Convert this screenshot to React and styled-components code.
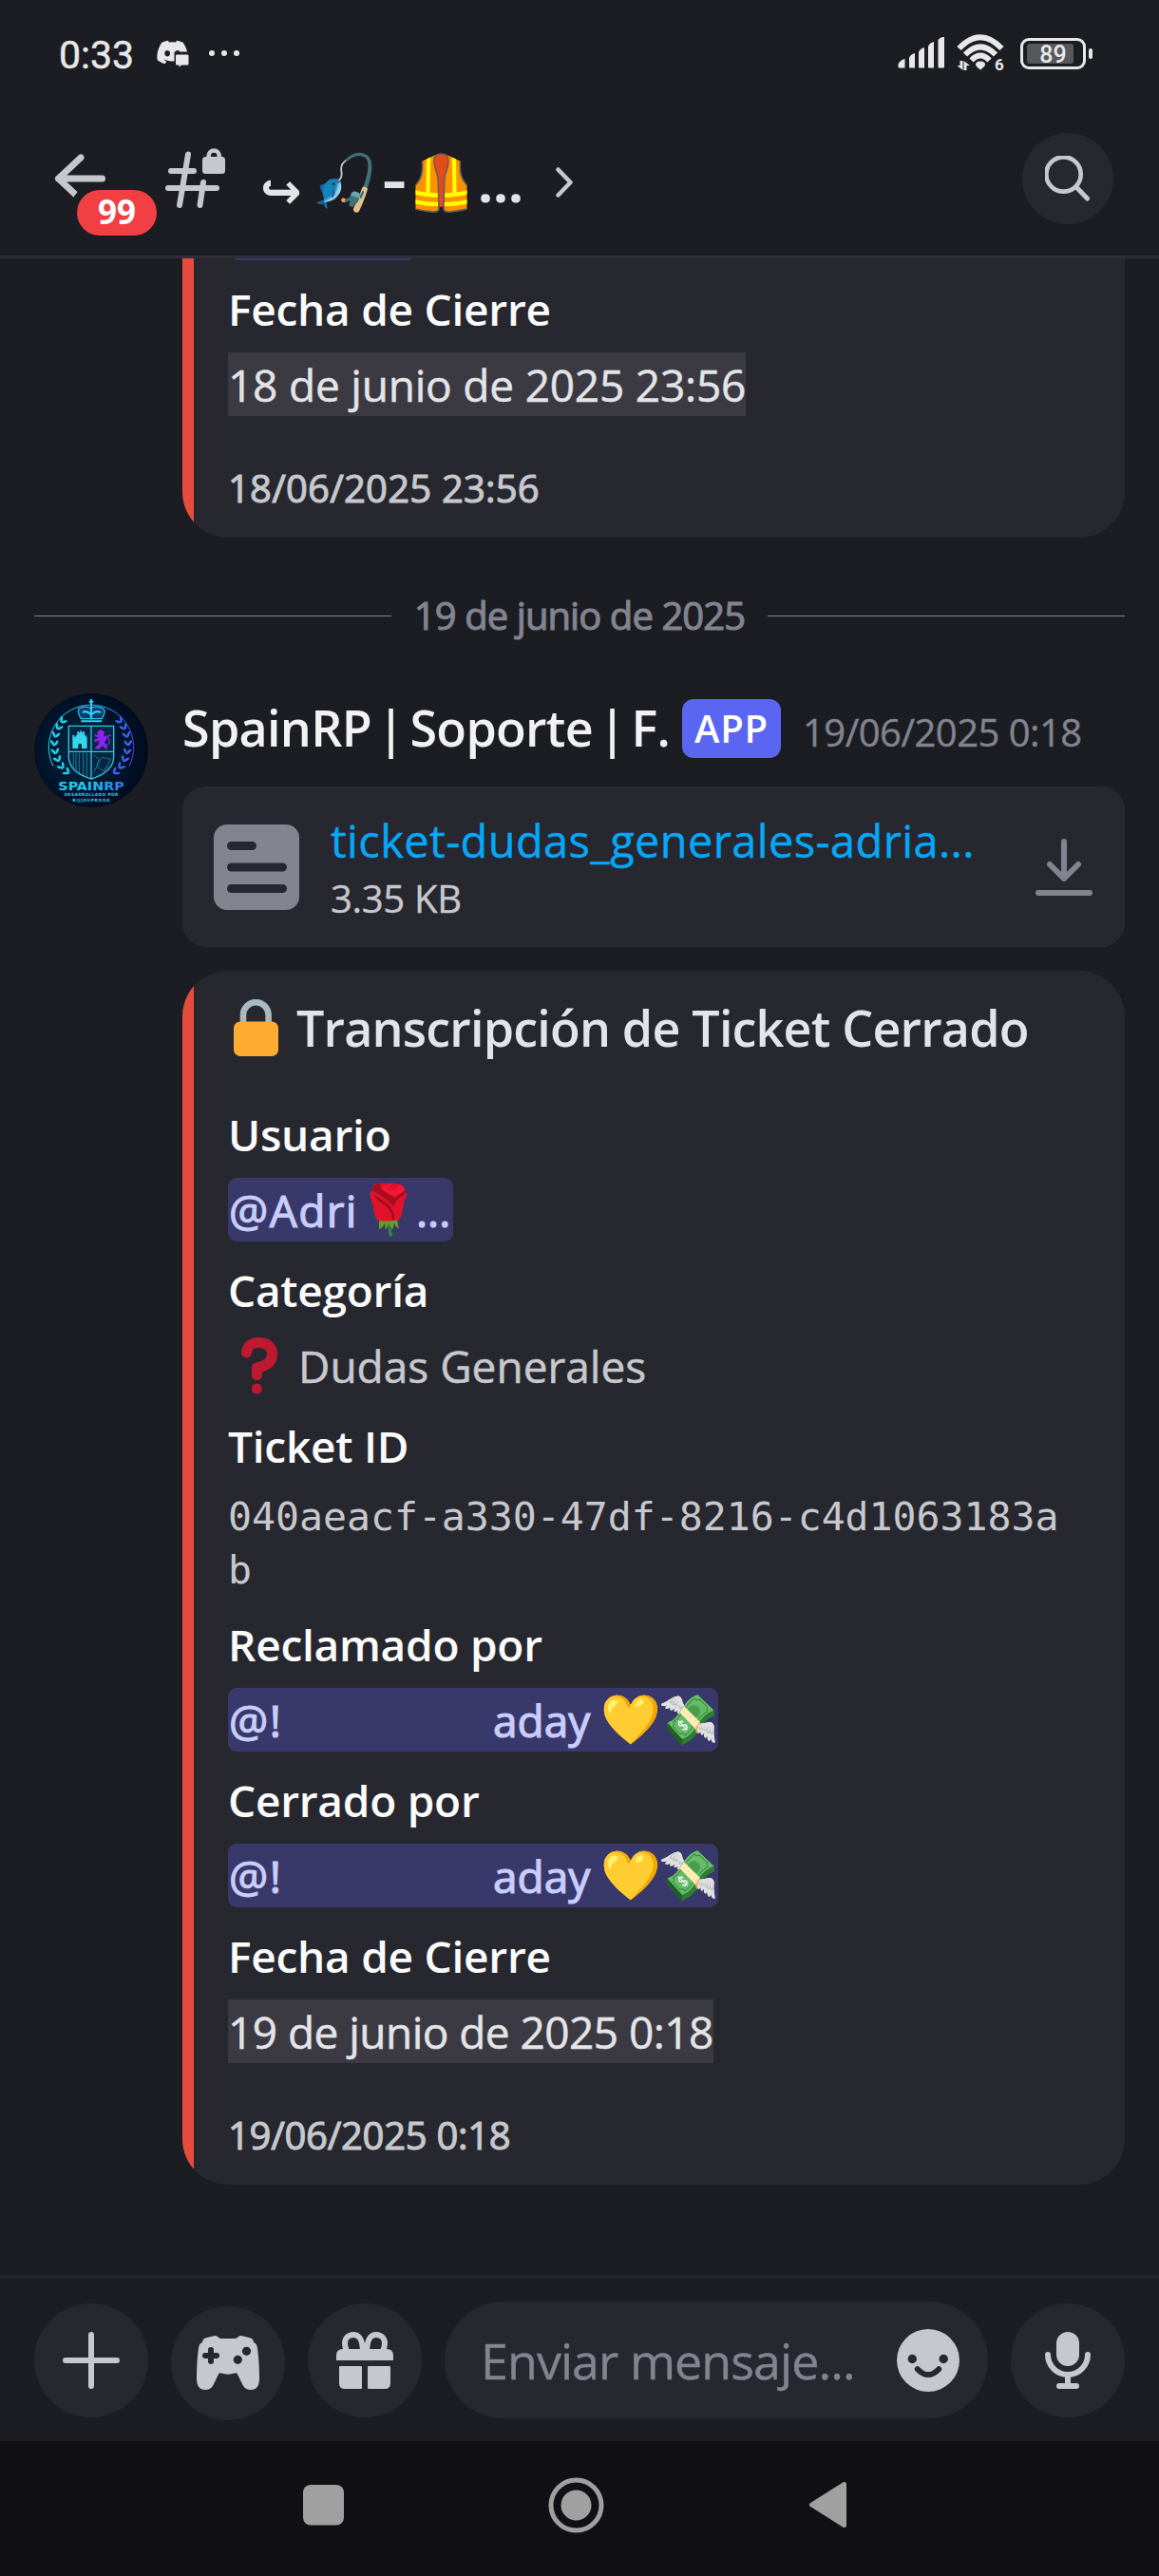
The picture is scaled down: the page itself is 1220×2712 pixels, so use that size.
import React from 'react';
import styled, { createGlobalStyle, ThemeProvider } from 'styled-components';
import { FaDiscord } from 'react-icons/fa';

const theme = {
  bg: '#1c1d22',
  surface: '#27282f',
  line: '#2e2f35',
  nav: '#111115',
  icon: '#c7c8cd',
  muted: '#82848f',
  status: '#e8e8e9',
  body: '#c7c8cd',
  strong: '#fbfbfb',
  title: '#e3e4e8',
  link: '#06a7f8',
  danger: '#f23f44',
  accent: '#e64c3d',
  blurple: '#5a66f2',
  mentionBg: '#38396a',
  mentionText: '#c9cdfb',
  timeBg: '#3b3a42',
};

const GlobalStyle = createGlobalStyle`
  *, *::before, *::after { box-sizing: border-box; }
  body { margin: 0; background: #1c1d22; }
`;

const Screen = styled.div`
  width: 1220px;
  height: 2712px;
  display: flex;
  flex-direction: column;
  overflow: hidden;
  background: ${({ theme }) => theme.bg};
  color: ${({ theme }) => theme.body};
  font-family: 'Open Sans', 'Noto Color Emoji', sans-serif;
  white-space: pre;
`;

/* ---------- status bar ---------- */

const StatusBar = styled.header`
  height: 112px;
  flex: none;
  display: flex;
  align-items: center;
  justify-content: space-between;
  padding: 0 70px 0 62px;
  color: ${({ theme }) => theme.status};
  font-family: Roboto, sans-serif;
`;

const StatusGroup = styled.div`
  display: flex;
  align-items: center;
`;

const Clock = styled.time`
  width: 78px;
  font-size: 41px;
  line-height: 48px;
  padding-top: 4px;
  margin-right: 24px;
  -webkit-text-stroke: 0.5px currentColor;
`;

const MoreDots = styled.div`
  display: flex;
  gap: 7px;
  margin-left: 20px;
`;

const MoreDot = styled.i`
  width: 6px;
  height: 6px;
  border-radius: 50%;
  background: currentColor;
`;

const Battery = styled.div`
  position: relative;
  width: 69px;
  height: 33px;
  margin-left: 11px;
  padding: 3px 4px;
  border: 3.5px solid currentColor;
  border-radius: 9px;
`;

const BatteryFill = styled.div`
  height: 100%;
  border-radius: 3px;
  background: #57585c;
`;

const BatteryLabel = styled.span`
  position: absolute;
  inset: 0;
  text-align: center;
  font-size: 25px;
  font-weight: 500;
  line-height: 29px;
`;

const BatteryTip = styled.div`
  width: 4px;
  height: 11px;
  margin-left: 3px;
  border-radius: 2px;
  background: currentColor;
`;

/* ---------- channel header ---------- */

const ChannelHeader = styled.nav`
  height: 160px;
  flex: none;
  display: flex;
  align-items: center;
  padding: 0 48px 5px 52px;
  border-bottom: 3px solid ${({ theme }) => theme.line};
  color: ${({ theme }) => theme.icon};
`;

const BackButton = styled.div`
  position: relative;
  width: 64px;
  height: 64px;
  margin-right: 58px;
`;

const UnreadBadge = styled.span`
  position: absolute;
  left: 29px;
  top: 44px;
  width: 84px;
  height: 48px;
  border-radius: 24px;
  background: ${({ theme }) => theme.danger};
  box-shadow: 0 0 0 8px ${({ theme }) => theme.bg};
  color: #fff;
  text-align: center;
  font-size: 35px;
  font-weight: 700;
  line-height: 46px;
`;

const ChannelName = styled.h1`
  margin: 0 auto 0 38px;
  display: flex;
  align-items: center;
  color: ${({ theme }) => theme.title};
  font-size: 56px;
  font-weight: 700;
  line-height: 70px;
`;

const HookArrow = styled.span`
  width: 40px;
  margin: 26px 18px 0 -2px;
  font-family: 'DejaVu Sans', sans-serif;
  font-size: 52px;
`;

const Emoji = styled.span`
  flex: none;
  display: flex;
  justify-content: center;
  width: ${({ $width }) => $width}px;
  padding-top: ${({ $drop }) => $drop || 0}px;
  font-family: 'Noto Color Emoji', sans-serif;
  font-size: ${({ $size }) => $size}px;
  font-weight: 400;
  line-height: 1;
`;

const Dash = styled.span`
  width: 42px;
  text-align: center;
  transform: scaleX(1.4);
`;

const Ellipsis = styled.span`
  width: 48px;
  margin: 0 34px 0 9px;
  padding-top: 6px;
`;

const SearchButton = styled.button`
  width: 96px;
  height: 96px;
  padding: 0;
  border: 0;
  border-radius: 50%;
  display: grid;
  place-items: center;
  background: ${({ theme }) => theme.surface};
  color: inherit;
`;

/* ---------- messages ---------- */

const Messages = styled.main`
  flex: 1;
  min-height: 0;
  overflow: hidden;
  padding: 0 36px;
`;

const Embed = styled.article`
  display: flex;
  overflow: hidden;
  border-radius: ${({ $cut }) => ($cut ? '0 0 48px 48px' : '48px')};
  margin-left: ${({ $cut }) => ($cut ? 156 : 0)}px;
  background: ${({ theme }) => theme.surface};
`;

const EmbedStripe = styled.div`
  width: 12px;
  flex: none;
  background: ${({ theme }) => theme.accent};
`;

const EmbedBody = styled.div`
  flex: 1;
  display: flex;
  flex-direction: column;
  align-items: flex-start;
  padding: ${({ $top }) => $top || 0}px 36px 27px;
`;

const EmbedTitle = styled.h2`
  margin: 0 0 26px 6px;
  display: flex;
  gap: 19px;
  color: ${({ theme }) => theme.title};
  font-size: 52px;
  font-weight: 600;
  line-height: 70px;
  letter-spacing: -0.8px;
`;

const TitleIcon = styled.span`
  display: flex;
  padding-top: 5px;
`;

const FieldName = styled.h3`
  margin: 21px 0 16px;
  color: ${({ theme }) => theme.strong};
  font-size: 46px;
  font-weight: 600;
  line-height: 60px;
  letter-spacing: -0.25px;
`;

const Value = styled.div`
  height: 67px;
  display: flex;
  align-items: center;
  font-size: 46px;
  letter-spacing: ${({ $spacing }) => $spacing || 0}px;
  -webkit-text-stroke: 0.5px currentColor;
`;

const Mention = styled(Value)`
  width: ${({ $width }) => $width}px;
  border-radius: 9px;
  background: ${({ theme }) => theme.mentionBg};
  color: ${({ theme }) => theme.mentionText};
  -webkit-text-stroke: 1.2px currentColor;
`;

const MentionTail = styled(Mention)`
  margin-top: -65px;
  border-radius: 12px;
`;

const MentionHandle = styled.span`
  flex: none;
  width: ${({ $width }) => $width}px;
  padding-left: 1px;
  letter-spacing: 1.4px;
`;

const MentionSuffix = styled.span`
  flex: none;
  width: 118px;
`;

const MentionMore = styled.span`
  margin-left: 9px;
`;

const Timestamp = styled(Value)`
  width: ${({ $width }) => $width}px;
  background: ${({ theme }) => theme.timeBg};
  color: ${({ theme }) => theme.title};
`;

const Category = styled(Value)`
  gap: 22px;
  padding-left: 14px;
`;

const Code = styled.code`
  width: 880px;
  height: 112px;
  padding-top: 1px;
  font-family: 'DejaVu Sans Mono', monospace;
  font-size: 41.5px;
  line-height: 56px;
  white-space: pre-wrap;
  word-break: break-all;
`;

const EmbedFooter = styled.footer`
  margin-top: 51px;
  font-size: 40px;
  line-height: 50px;
  letter-spacing: ${({ $spacing }) => $spacing}px;
  -webkit-text-stroke: 1.1px currentColor;
`;

const DayDivider = styled.div`
  display: flex;
  align-items: center;
  gap: 24px;
  margin: 57px 0 57px;
  color: ${({ theme }) => theme.muted};
  font-size: 40px;
  line-height: 50px;
  letter-spacing: -0.93px;
  -webkit-text-stroke: 1.1px currentColor;

  &::before,
  &::after {
    content: '';
    flex: 1;
    height: 1px;
    margin-top: 1px;
    background: currentColor;
  }
`;

const Message = styled.section`
  display: grid;
  grid-template-columns: 120px 1fr;
  column-gap: 36px;
`;

const MessageColumn = styled.div`
  display: flex;
  flex-direction: column;
`;

const MessageMeta = styled.div`
  height: 98px;
  display: flex;
  align-items: flex-start;
  padding-top: 1px;
`;

const Author = styled.strong`
  width: 526px;
  color: #f2f2f4;
  font-size: 52px;
  font-weight: 600;
  line-height: 70px;
  letter-spacing: -0.7px;
  word-spacing: -6.5px;
`;

const AppTag = styled.span`
  width: 104px;
  height: 62px;
  margin: 5px 23px 0 0;
  border-radius: 12px;
  background: ${({ theme }) => theme.blurple};
  color: #fff;
  text-align: center;
  font-size: 40px;
  font-weight: 600;
  line-height: 62px;
  letter-spacing: 0.8px;
`;

const SentAt = styled.time`
  color: ${({ theme }) => theme.muted};
  font-size: 40px;
  line-height: 70px;
  padding-top: 5px;
  letter-spacing: -0.55px;
  -webkit-text-stroke: 0.4px currentColor;
`;

const FileCard = styled.div`
  height: 169px;
  margin-bottom: 25px;
  display: flex;
  align-items: center;
  padding: 0 33px 0 32px;
  border: 1px solid #2b2c33;
  border-radius: 25px;
  background: ${({ theme }) => theme.surface};
  color: ${({ theme }) => theme.muted};
`;

const FileText = styled.div`
  flex: 1;
  margin-left: 33px;
  -webkit-text-stroke: 0.4px currentColor;
`;

const FileName = styled.div`
  color: ${({ theme }) => theme.link};
  font-size: 47px;
  line-height: 60px;
  letter-spacing: 0.36px;
`;

const FileSize = styled.div`
  margin-top: 6px;
  color: ${({ theme }) => theme.body};
  font-size: 40px;
  line-height: 50px;
  letter-spacing: -0.3px;
`;

/* ---------- composer and system nav ---------- */

const Composer = styled.footer`
  height: 175px;
  flex: none;
  display: flex;
  align-items: center;
  gap: 24px;
  padding: 0 36px;
  border-top: 4px solid #24252b;
  color: ${({ theme }) => theme.icon};
`;

const RoundButton = styled.button`
  width: 120px;
  height: 120px;
  flex: none;
  padding: 0;
  border: 0;
  border-radius: 50%;
  margin-top: ${({ $drop }) => $drop || 0}px;
  display: grid;
  place-items: center;
  background: ${({ theme }) => theme.surface};
  color: inherit;
`;

const Input = styled.div`
  flex: 1;
  height: 123px;
  border-radius: 62px;
  display: flex;
  align-items: center;
  justify-content: space-between;
  padding: 0 30px 0 38px;
  background: ${({ theme }) => theme.surface};
`;

const Placeholder = styled.span`
  color: ${({ theme }) => theme.muted};
  font-size: 52px;
  line-height: 70px;
  letter-spacing: -0.95px;
  -webkit-text-stroke: 0.4px currentColor;
`;

const SystemNav = styled.nav`
  height: 142px;
  flex: none;
  display: grid;
  grid-template-columns: repeat(3, 60px);
  column-gap: 205.5px;
  justify-content: center;
  align-items: center;
  justify-items: center;
  padding: 0 8px 8px 0;
  background: ${({ theme }) => theme.nav};
  color: #a0a0a1;
`;

/* ---------- drawings ---------- */

const stroke = (w) => ({ fill: 'none', stroke: 'currentColor', strokeWidth: w, strokeLinecap: 'round', strokeLinejoin: 'round' });

const DiscordNotice = () => (
  <svg width="36" height="30" viewBox="0 0 36 30">
    <FaDiscord size={35} y={-3.5} />
    <path d="M19.500 13.500h17v17h-17z" fill="#1c1d22" />
    <path d="M22 16.500h11.500a1 1 0 0 1 1 1v9a1 1 0 0 1-1 1h-6.500l-2.500 2.300v-2.300h-2.500a1 1 0 0 1-1-1v-9a1 1 0 0 1 1-1z" fill="currentColor" />
  </svg>
);

const Signal = () => (
  <svg width="50" height="34" viewBox="0 0 50 34" fill="currentColor">
    <path d="M0.500 28.500q2-4.500 7-5.500v9.500h-6q-1 0-1-1zM12 22q1.500-4 6-5v15.500h-5q-1 0-1-1zM22 16q1.500-4 6-5v21.500h-5q-1 0-1-1zM32 10q1.500-4 6-5v27.500h-5q-1 0-1-1zM42.500 3q1.500-2.500 6.500-3.500v32q0 1-1 1h-4.500q-1 0-1-1z" />
  </svg>
);

const SignalBox = styled.div`
  display: flex;
  margin-right: 12px;
`;

const Wifi = () => (
  <svg width="56" height="46" viewBox="0 -3 56 46">
    <g fill="none" stroke="currentColor" strokeWidth="6">
      <path d="M2.500 15Q25-8.500 47.500 15" />
      <path d="M9 21.500Q25 5.500 41 21.500" />
      <path d="M15.500 27.500Q25 17.500 34.500 27.500" />
    </g>
    <path d="M20 32q0-3.500 5-3.500t5 3.500q0 1.500-5 5.500q-5-4-5-5.500z" fill="currentColor" />
    <path d="M3.500 28h3v10L0.500 33h3zM9.500 38h-2V28l6.500 5h-3.500v5z" fill="currentColor" />
    <text x="40" y="38" fill="currentColor" fontFamily="Roboto, sans-serif" fontWeight="700" fontSize="17">6</text>
  </svg>
);

const BackArrow = () => (
  <svg width="64" height="64" viewBox="0 0 64 64">
    <path {...stroke(7)} d="M33 10 L9.500 32 L33 54 M9.500 32 H55.500" />
  </svg>
);

const LockedHash = () => (
  <svg width="64" height="64" viewBox="174 155 64 64">
    <path {...stroke(6)} d="M198 161.500L189 215M214 191L210.500 215M180 179H204M177 197H228" />
    <rect x="213" y="164" width="24" height="18" rx="3.500" fill="currentColor" />
    <path d="M219.700 166v-3a5.500 5.500 0 0 1 11 0v3" fill="none" stroke="currentColor" strokeWidth="4.500" />
  </svg>
);

const Chevron = () => (
  <svg width="18" height="32" viewBox="0 0 18 32">
    <path {...stroke(4.5)} d="M2.500 2.500L15.500 16L2.500 29.500" />
  </svg>
);

const ChevronBox = styled.span`
  display: flex;
  padding-top: 8px;
  color: ${({ theme }) => theme.icon};
`;

const SearchIcon = () => (
  <svg width="48" height="48" viewBox="0 0 48 48">
    <circle cx="19.500" cy="19.500" r="18.200" {...stroke(4.7)} />
    <path {...stroke(5)} d="M33 33L44.500 45" />
  </svg>
);

const LockEmoji = () => (
  <svg width="47" height="60" viewBox="0 0 47 60">
    <path d="M10 26V16.500a13.300 13.300 0 0 1 26.600 0V26" fill="none" stroke="#aab8c2" strokeWidth="6.600" />
    <rect y="23.500" width="47" height="36.500" rx="7" fill="#ffac33" />
  </svg>
);

const RoseEmoji = () => (
  <svg width="40" height="57" viewBox="26 16 120 171">
    <path d="M83 132l3 44q0 11 6 11q9-1 6-12q-4-4-1-16q3-12-3-27z" fill="#3b7f3c" />
    <path d="M58 128h54q4 20 6 32q-10-3-14-16q-2 14-5 20q-8-6-11-22q-4 16-12 22q-2-10-1-19q-6 13-18 18q-3-12 1-35z" fill="#6a9a2e" />
    <path d="M28 52q-2-8 8-8q-4-24 14-26q16-2 28 1q14-4 28 1q18-2 27 8q7 8 1 18q12 2 10 10q-4 10-8 16q-2 14-6 32q-4 24-12 30q-24 6-64 2q-14-8-16-48q-8-12-10-36z" fill="#e2122b" />
    <path d="M36 40q0-22 26-22q-8 12 10 24q22 12 38 28q-6 10-8 20q-20-20-40-32q-18-10-26-18z" fill="#a90d1f" />
    <path d="M40 52q6 8 24 18q40 22 42 64h-8q0-34-34-54q-20-12-24-28z" fill="#a00c1c" />
    <path d="M136 46q-22 4-32 24q-8 14-2 24q4-24 34-38z" fill="#a90d1f" />
    <path d="M64 36q12-16 32-16q-2 10-20 14q10 8 24 6q16-2 18-16q16 2 16 14q-6 14-26 20q-24-4-44-22z" fill="#f5173a" />
  </svg>
);

const QuestionEmoji = () => (
  <svg width="38" height="60" viewBox="0 0 38 60">
    <path {...stroke(11)} stroke="#be1931" d="M5.500 16C6 9 11.500 5.500 18.500 5.500C27 5.500 32.500 10 32.500 18C32.500 27 24 30.500 16.500 32V39.500" />
    <circle cx="16.300" cy="54" r="5.500" fill="#be1931" />
  </svg>
);

const FileIcon = () => (
  <svg width="90" height="90" viewBox="0 0 90 90">
    <rect width="90" height="90" rx="14" fill="currentColor" />
    <path d="M18.500 22.500H40.500M18.500 45H72.500M18.500 67.500H72.500" fill="none" stroke="#27282f" strokeWidth="9" strokeLinecap="round" />
  </svg>
);

const DownloadIcon = () => (
  <svg width="60" height="60" viewBox="0 0 60 60">
    <path {...stroke(6)} d="M30 3V41M15 27L30 42L45 27M3 57H57" />
  </svg>
);

const PlusIcon = () => (
  <svg width="60" height="60" viewBox="0 0 60 60">
    <path {...stroke(6)} d="M30 3V57M3 30H57" />
  </svg>
);

const GamepadIcon = () => (
  <svg width="66" height="57" viewBox="0 0 66 57">
    <path fill="currentColor" d="M6 7Q6.200 3.500 9 2.500L18 0.200Q21-0.500 23 1.800Q24 3 26 3H40Q42 3 43 1.800Q45-0.500 48 0.200L57 2.500Q59.800 3.500 60 7Q63 8 63.800 12Q66 26 66 45Q66 57 57 57Q51 57 48.500 52L43 40.500Q42 38.800 40 39.500Q33 41.800 26 39.500Q24 38.800 23 40.500L17.500 52Q15 57 9 57Q0 57 0 45Q0 26 2.200 12Q3 8 6 7Z" />
    <path d="M15 15V27M9 21H21" fill="none" stroke="#27282f" strokeWidth="6" strokeLinecap="round" />
    <circle cx="43.300" cy="25.300" r="4.600" fill="#27282f" />
    <circle cx="52.500" cy="16.300" r="4.600" fill="#27282f" />
  </svg>
);

const GiftIcon = () => (
  <svg width="60" height="60" viewBox="0 0 60 60" fill="currentColor">
    <path d="M0 30V25Q0 18 7 18H53Q60 18 60 25V30ZM3 37Q3 36 4 36H26Q27 36 27 37V59Q27 60 26 60H9Q3 60 3 54ZM33 37Q33 36 34 36H56Q57 36 57 37V54Q57 60 51 60H34Q33 60 33 59Z" />
    <path d="M28 20C27.500 10 25.500 3 18 3C12.500 3 9 7 9 12Q9 16 11 20M32 20C32.500 10 34.500 3 42 3C47.500 3 51 7 51 12Q51 16 49 20" fill="none" stroke="currentColor" strokeWidth="6" />
  </svg>
);

const SmileIcon = () => (
  <svg width="66" height="66" viewBox="0 0 66 66">
    <circle cx="33" cy="33" r="33" fill="currentColor" />
    <circle cx="16.300" cy="31.500" r="4.700" fill="#27282f" />
    <circle cx="49.200" cy="31.500" r="4.700" fill="#27282f" />
    <path d="M21.800 42.200Q33 54 44.200 42.200" fill="none" stroke="#27282f" strokeWidth="6" strokeLinecap="round" />
  </svg>
);

const MicIcon = () => (
  <svg width="48" height="60" viewBox="0 0 48 60">
    <rect x="12" width="24" height="36" rx="12" fill="currentColor" />
    <path {...stroke(6)} d="M3 24a21 21 0 0 0 42 0M24 46V56M15 57H33" />
  </svg>
);

const RecentsIcon = () => (
  <svg width="43" height="43" viewBox="0 0 43 43">
    <rect width="43" height="42.500" rx="8" fill="currentColor" />
  </svg>
);

const HomeIcon = () => (
  <svg width="59" height="59" viewBox="0 0 59 59">
    <circle cx="29.500" cy="29.500" r="26.500" fill="none" stroke="currentColor" strokeWidth="5" />
    <circle cx="29.500" cy="29.500" r="16" fill="currentColor" />
  </svg>
);

const BackIcon = () => (
  <svg width="41" height="50" viewBox="0 0 41 50">
    <path d="M3.500 25L37.500 3.500V46.500Z" fill="currentColor" stroke="currentColor" strokeWidth="5" strokeLinejoin="round" />
  </svg>
);

const leaves = [[141, 143, -38], [127, 163, -25], [117, 187, -12], [112, 213, 0], [114, 239, 12], [121, 264, 26], [132, 287, 42], [148, 305, 58]];

const Laurel = ({ color }) => (
  <g fill={color}>
    {leaves.map(([x, y, a]) => (
      <g key={y} transform={`translate(${x} ${y}) rotate(${-a})`}>
        <ellipse cx="-7" cy="0" rx="4" ry="11" transform="rotate(-32)" />
        <ellipse cx="7" cy="0" rx="4" ry="10" transform="rotate(34)" />
      </g>
    ))}
  </g>
);

const Avatar = () => (
  <svg width="120" height="120" viewBox="48 60 360 360">
    <defs>
      <radialGradient id="sky" cx="0.42" cy="0.5" r="0.6">
        <stop offset="0" stopColor="#052a42" />
        <stop offset="0.6" stopColor="#02142c" />
        <stop offset="1" stopColor="#010a1c" />
      </radialGradient>
      <linearGradient id="neon" gradientUnits="userSpaceOnUse" x1="95" y1="0" x2="365" y2="0">
        <stop offset="0" stopColor="#18dfe6" />
        <stop offset="0.55" stopColor="#20bdf0" />
        <stop offset="0.85" stopColor="#3177ee" />
        <stop offset="1" stopColor="#6c2be8" />
      </linearGradient>
      <clipPath id="shield"><path d="M157 163H299V262Q297 310 228 330Q159 310 157 262Z" /></clipPath>
    </defs>
    <circle cx="228" cy="240" r="180" fill="url(#sky)" />
    <path d="M108 290A134 134 0 1 1 348 290" fill="none" stroke="url(#neon)" strokeWidth="3" />
    <Laurel color="#1fd3ea" />
    <g transform="translate(456 0) scale(-1 1)"><Laurel color="#3a62ee" /></g>
    <path d="M190 108Q206 98 226 106Q250 98 266 108Q276 118 262 140H196Q182 118 190 108Z" fill="#0b3f6b" stroke="#2fb6ee" strokeWidth="4" />
    <path d="M228 78V142M221 86H235M196 148H262M200 120Q214 112 228 128Q242 112 258 120" fill="none" stroke="#38cdf5" strokeWidth="6" />
    <g clipPath="url(#shield)">
      <path d="M157 163H299V330H157Z" fill="#04263f" />
      <path d="M172 248V330M180 248V330M190 248V330M203 248V330M214 248V330" stroke="#197e9c" strokeWidth="3" />
      <path d="M236 254L252 268L246 290L268 306L290 268L262 262L246 290L236 310M268 306L284 292" fill="none" stroke="#3a8fc0" strokeWidth="2" />
    </g>
    <path d="M157 163H299V262Q297 310 228 330Q159 310 157 262ZM228 163V330M157 244H299" fill="none" stroke="#35c3e0" strokeWidth="4" />
    <path d="M169 192H175V197H180V192H184V180H189V184H193V178H198V184H202V180H207V192H211V197H216V192H215V234H198V222Q192 214 187 222V234H169Z" fill="#35d5f0" />
    <path d="M246 182L256 174L270 180L268 196L280 192L276 206L270 214L280 226L276 240L266 226L252 236L238 234L250 222L254 210L240 214L236 206L252 200L240 196L238 188L250 192Z" fill="#8c22ee" />
    <path d="M280 222Q292 214 282 202Q278 192 290 192" fill="none" stroke="#8c22ee" strokeWidth="4" />
    <g fontFamily="'DejaVu Sans', sans-serif" fontWeight="700" textAnchor="middle">
      <text x="228" y="365" fontSize="38" textLength="208" lengthAdjust="spacingAndGlyphs" fill="url(#neon)">SPAINRP</text>
      <text x="228" y="385" fontSize="13" textLength="170" fill="#27c4e4">DESARROLLADO POR</text>
      <text x="228" y="402" fontSize="13" textLength="118" fill="#27c4e4">BIJJOUPROGG</text>
    </g>
  </svg>
);

/* ---------- content ---------- */

const UserMention = () => (
  <Mention $width={516}>
    <MentionHandle $width={279}>@!</MentionHandle>
    <MentionSuffix>aday</MentionSuffix>
    <Emoji $width={54} $size={51}>💛</Emoji>
    <Emoji $width={68} $size={51}>💸</Emoji>
  </Mention>
);

const statusDots = [0, 1, 2];
const batteryLevel = 89;

export default function App() {
  return (
    <ThemeProvider theme={theme}>
      <GlobalStyle />
      <Screen>
        <StatusBar>
          <StatusGroup>
            <Clock>0:33</Clock>
            <DiscordNotice />
            <MoreDots>{statusDots.map((d) => <MoreDot key={d} />)}</MoreDots>
          </StatusGroup>
          <StatusGroup>
            <SignalBox><Signal /></SignalBox>
            <Wifi />
            <Battery>
              <BatteryFill style={{ width: `${batteryLevel}%` }} />
              <BatteryLabel>{batteryLevel}</BatteryLabel>
            </Battery>
            <BatteryTip />
          </StatusGroup>
        </StatusBar>

        <ChannelHeader>
          <BackButton>
            <BackArrow />
            <UnreadBadge>99</UnreadBadge>
          </BackButton>
          <LockedHash />
          <ChannelName>
            <HookArrow>↪</HookArrow>
            <Emoji $width={62} $size={57} $drop={8}>🎣</Emoji>
            <Dash>-</Dash>
            <Emoji $width={58} $size={57} $drop={8}>🦺</Emoji>
            <Ellipsis>...</Ellipsis>
            <ChevronBox><Chevron /></ChevronBox>
          </ChannelName>
          <SearchButton><SearchIcon /></SearchButton>
        </ChannelHeader>

        <Messages>
          <Embed $cut>
            <EmbedStripe />
            <EmbedBody>
              <MentionTail $width={200} />
              <FieldName>Fecha de Cierre</FieldName>
              <Timestamp $width={545} $spacing={-0.2}>18 de junio de 2025 23:56</Timestamp>
              <EmbedFooter $spacing={0.2}>18/06/2025 23:56</EmbedFooter>
            </EmbedBody>
          </Embed>

          <DayDivider>19 de junio de 2025</DayDivider>

          <Message>
            <Avatar />
            <MessageColumn>
              <MessageMeta>
                <Author>SpainRP | Soporte | F.</Author>
                <AppTag>APP</AppTag>
                <SentAt>19/06/2025 0:18</SentAt>
              </MessageMeta>

              <FileCard>
                <FileIcon />
                <FileText>
                  <FileName>ticket-dudas_generales-adria...</FileName>
                  <FileSize>3.35 KB</FileSize>
                </FileText>
                <DownloadIcon />
              </FileCard>

              <Embed>
                <EmbedStripe />
                <EmbedBody $top={25}>
                  <EmbedTitle>
                    <TitleIcon><LockEmoji /></TitleIcon>
                    Transcripción de Ticket Cerrado
                  </EmbedTitle>
                  <FieldName>Usuario</FieldName>
                  <Mention $width={237}>
                    <MentionHandle $width={149}>@Adri</MentionHandle>
                    <RoseEmoji />
                    <MentionMore>...</MentionMore>
                  </Mention>
                  <FieldName>Categoría</FieldName>
                  <Category $spacing={0}><QuestionEmoji />Dudas Generales</Category>
                  <FieldName>Ticket ID</FieldName>
                  <Code>040aeacf-a330-47df-8216-c4d1063183ab</Code>
                  <FieldName>Reclamado por</FieldName>
                  <UserMention />
                  <FieldName>Cerrado por</FieldName>
                  <UserMention />
                  <FieldName>Fecha de Cierre</FieldName>
                  <Timestamp $width={511} $spacing={-0.54}>19 de junio de 2025 0:18</Timestamp>
                  <EmbedFooter $spacing={-0.3}>19/06/2025 0:18</EmbedFooter>
                </EmbedBody>
              </Embed>
            </MessageColumn>
          </Message>
        </Messages>

        <Composer>
          <RoundButton><PlusIcon /></RoundButton>
          <RoundButton $drop={6}><GamepadIcon /></RoundButton>
          <RoundButton><GiftIcon /></RoundButton>
          <Input>
            <Placeholder>Enviar mensaje...</Placeholder>
            <SmileIcon />
          </Input>
          <RoundButton><MicIcon /></RoundButton>
        </Composer>

        <SystemNav>
          <RecentsIcon />
          <HomeIcon />
          <BackIcon />
        </SystemNav>
      </Screen>
    </ThemeProvider>
  );
}
